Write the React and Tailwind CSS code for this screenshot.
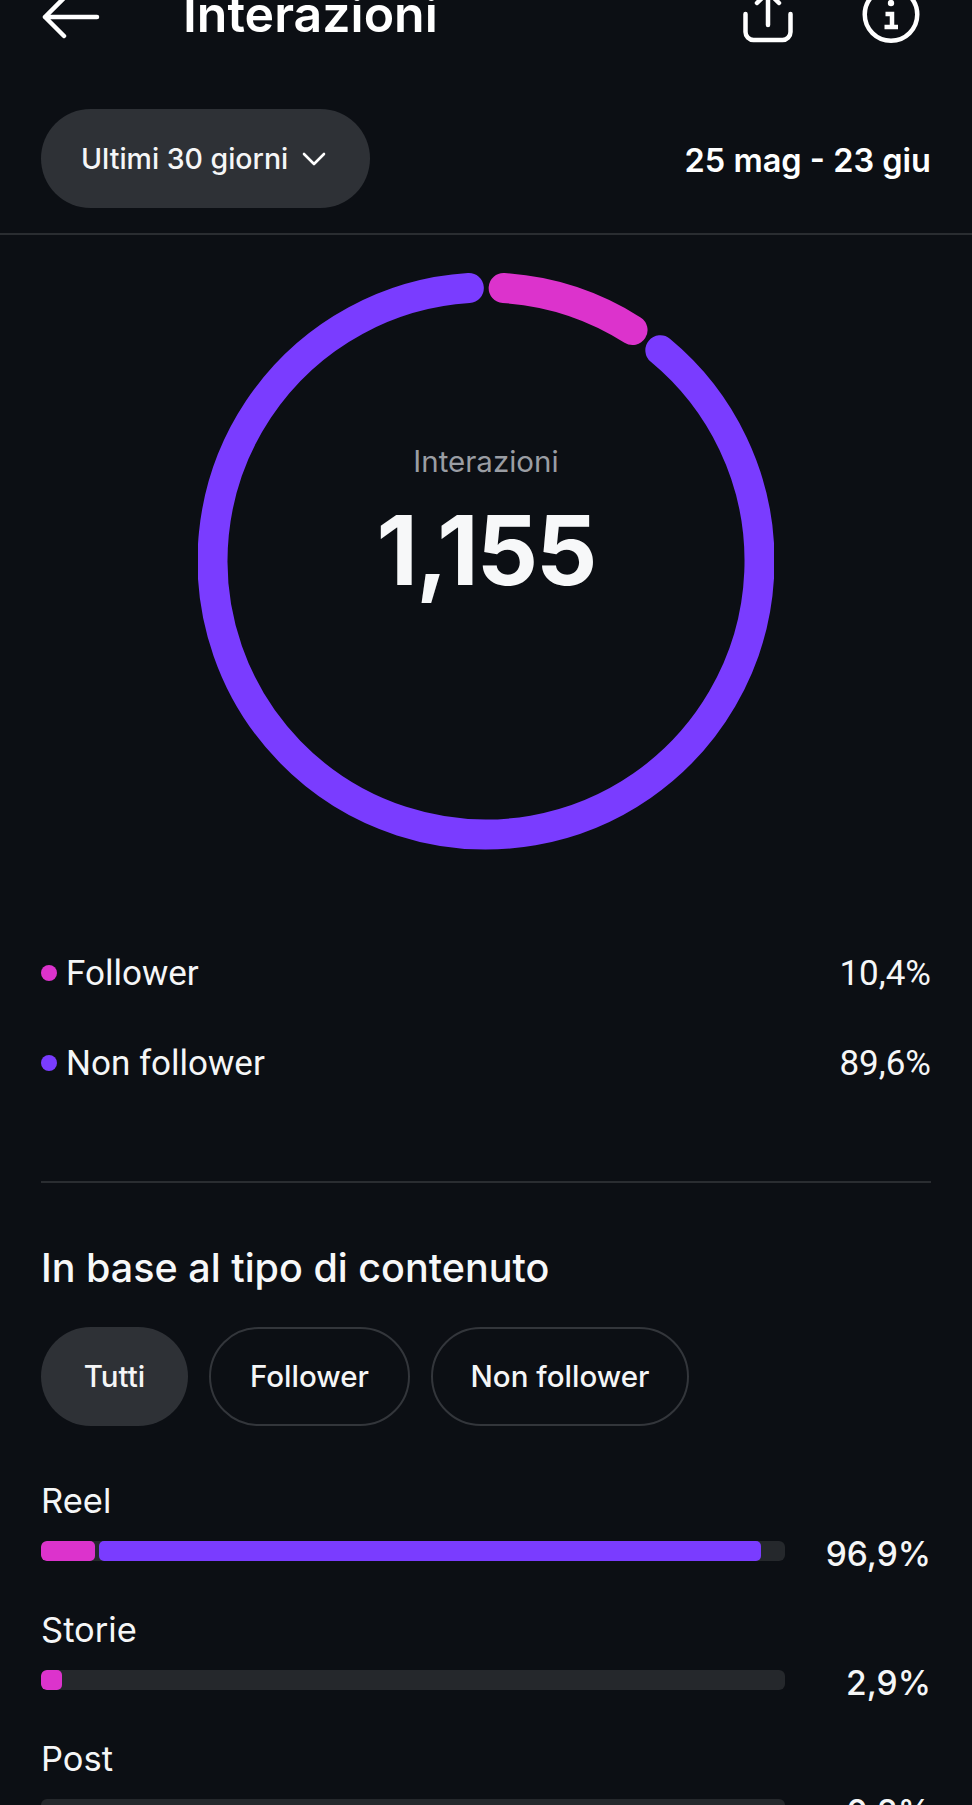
const PINK = '#dc33cc';
const PURPLE = '#7a3cff';

/* ── Ring helpers ── */
const CX = 288;
const CY = 289;
const R = 273.5;

function arc(from, to) {
  const pt = a => {
    const rad = (a * Math.PI) / 180;
    return `${(CX + R * Math.sin(rad)).toFixed(2)} ${(CY - R * Math.cos(rad)).toFixed(2)}`;
  };
  const large = to - from > 180 ? 1 : 0;
  return `M ${pt(from)} A ${R} ${R} 0 ${large} 1 ${pt(to)}`;
}

function Ring() {
  return (
    <svg width="576" height="578" viewBox="0 0 576 578" fill="none" strokeWidth="30" strokeLinecap="round">
      <path d={arc(39.6, 356.4)} stroke={PURPLE} />
      <path d={arc(3.7, 32.4)} stroke={PINK} />
    </svg>
  );
}

function BackIcon() {
  return (
    <svg width="60" height="60" viewBox="0 0 60 60" fill="none" stroke="#fff" strokeWidth="4.5" strokeLinecap="round" strokeLinejoin="round">
      <path d="M56 27 H4 M23 8 L4 27 L23 46" />
    </svg>
  );
}

function ShareIcon() {
  return (
    <svg width="50" height="60" viewBox="0 0 50 60" fill="none" stroke="#fff" strokeWidth="4.5" strokeLinecap="round" strokeLinejoin="round">
      <path d="M2.5 24 V42 a8 8 0 0 0 8 8 H39.5 a8 8 0 0 0 8 -8 V24" />
      <path d="M25 35 V3 M14 13 L25 2 L36 13" />
    </svg>
  );
}

function InfoIcon() {
  return (
    <svg width="60" height="60" viewBox="0 0 60 60" fill="none" stroke="#fff" strokeWidth="4.5">
      <circle cx="30" cy="24.5" r="26.25" />
      <circle cx="30" cy="13" r="3.2" fill="#fff" stroke="none" />
      <path d="M24.5 24 H31 V37 M23.5 37 H37" />
    </svg>
  );
}

function Chevron() {
  return (
    <svg width="24" height="14" viewBox="0 0 24 14" fill="none" stroke="#fff" strokeWidth="2.6" strokeLinecap="round" strokeLinejoin="round">
      <path d="M2 2 L12 12 L22 2" />
    </svg>
  );
}

function LegendRow({ color, label, value }) {
  return (
    <div className="flex items-center justify-between h-10 font-['Roboto',sans-serif] text-[35px] text-[#f5f6f7]">
      <div className="flex items-center">
        <span className="w-4 h-4 rounded-full mr-[9px] -mt-[3px]" style={{ background: color }} />
        <span>{label}</span>
      </div>
      <span>{value}</span>
    </div>
  );
}

function Chip({ label, active, className }) {
  return (
    <div className={`h-[99px] rounded-full flex items-center justify-center text-[29.5px] font-medium text-[#f5f6f7] ${active ? 'bg-[#2e3136]' : 'border-2 border-[#33363b]'} ${className}`}>
      {label}
    </div>
  );
}

function ContentRow({ label, value, segments }) {
  return (
    <div className="mb-[41px]">
      <div className="h-9 flex items-center text-[34.5px] leading-9 text-[#f5f6f7]">{label}</div>
      <div className="mt-[12px] h-10 flex items-center justify-between">
        <div className="w-[744px] h-5 rounded-[6px] bg-[#25282c] flex overflow-hidden">
          {segments.map(s => (
            <div key={s.color} className="h-full rounded-[5px] mr-1" style={{ width: s.width, background: s.color }} />
          ))}
        </div>
        <span className="mt-[6px] text-[33.5px] font-medium text-[#f5f6f7]">{value}</span>
      </div>
    </div>
  );
}

export default function App() {
  return (
    <div className="w-[972px] h-[1805px] overflow-hidden bg-[#0c0f14] text-white font-['Inter',sans-serif]">
      {/* Header, cut by the top of the screen */}
      <div className="-mt-[20px] h-[80px] pl-[41px] pr-[51px] flex items-center">
        <BackIcon />
        <h1 className="ml-[82px] -mt-[12px] text-[50px] font-semibold leading-none">Interazioni</h1>
        <div className="ml-auto flex items-center gap-[68px]">
          <ShareIcon />
          <InfoIcon />
        </div>
      </div>

      <div className="mt-[49px] px-[41px] flex items-center justify-between">
        <div className="h-[99px] w-[329px] rounded-full bg-[#2e3136] flex items-center pl-[40px] gap-[14px]">
          <span className="mt-[2px] text-[28.5px] font-medium text-[#f5f6f7]">Ultimi 30 giorni</span>
          <Chevron />
        </div>
        <span className="mt-[6px] text-[32.5px] font-semibold">25 mag - 23 giu</span>
      </div>

      <div className="mt-[25px] h-[2px] bg-[#2a2d31]" />

      {/* Donut */}
      <div className="mt-[37px] relative w-[576px] h-[578px] mx-auto">
        <Ring />
        <div className="absolute inset-0 flex flex-col items-center pt-[171px]">
          <span className="text-[29.5px] leading-9 text-[#9a9da3]">Interazioni</span>
          <span className="mt-[16px] text-[96px] leading-[110px] font-bold tracking-[-2px] text-[#f7f8f9]">1,155</span>
        </div>
      </div>

      <div className="px-[41px]">
        <div className="mt-[104px] flex flex-col gap-[50px]">
          <LegendRow color={PINK} label="Follower" value="10,4%" />
          <LegendRow color={PURPLE} label="Non follower" value="89,6%" />
        </div>

        <div className="mt-[97px] h-[2px] bg-[#2a2d31]" />

        <h2 className="mt-[61px] text-[39.5px] leading-[48px] font-medium text-[#f7f8f9]">In base al tipo di contenuto</h2>

        <div className="mt-[35px] flex gap-[21px]">
          <Chip label="Tutti" active className="w-[147px]" />
          <Chip label="Follower" className="w-[201px]" />
          <Chip label="Non follower" className="w-[258px]" />
        </div>

        <div className="mt-[57px]">
          <ContentRow
            label="Reel"
            value="96,9%"
            segments={[
              { color: PINK, width: 54 },
              { color: PURPLE, width: 662 },
            ]}
          />
          <ContentRow label="Storie" value="2,9%" segments={[{ color: PINK, width: 21 }]} />
          <ContentRow label="Post" value="0,2%" segments={[]} />
        </div>
      </div>
    </div>
  );
}
